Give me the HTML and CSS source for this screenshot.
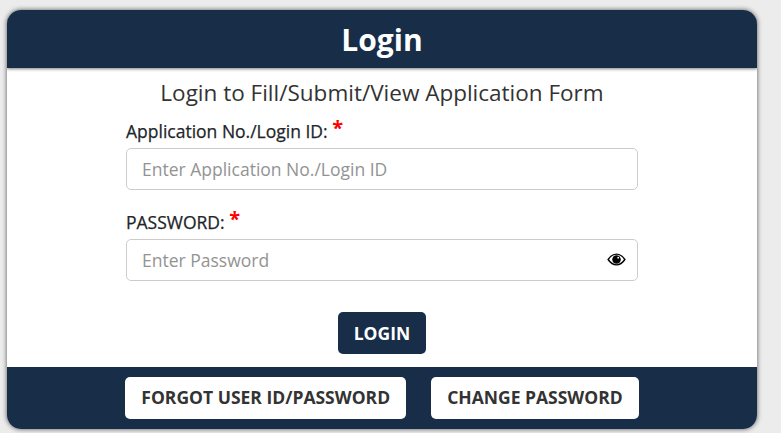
FILE: index.html
```html
<!DOCTYPE html>
<html lang="en">
<head>
    <meta charset="UTF-8">
    <meta name="viewport" content="width=device-width, initial-scale=1.0">
    <title>Login</title>
    <link rel="stylesheet" href="styles.css">
</head>
<body>
    <div class="login-card">
        <div class="card-header">
            <h1>Login</h1>
        </div>
        <div class="card-body">
            <h2 class="form-title">Login to Fill/Submit/View Application Form</h2>
            <form class="login-form">
                <div class="form-group">
                    <label for="loginId">Application No./Login ID: <span class="required">*</span></label>
                    <input type="text" id="loginId" placeholder="Enter Application No./Login ID">
                </div>
                <div class="form-group">
                    <label for="password">PASSWORD: <span class="required">*</span></label>
                    <div class="password-box">
                        <input type="password" id="password" placeholder="Enter Password">
                        <svg class="eye-icon" viewBox="0 0 20 14" width="19" height="13" aria-hidden="true">
                            <path d="M1 7C3.5 3.2 6.5 1.2 10 1.2S16.500 3.200 19 7C16.500 10.800 13.500 12.800 10 12.800S3.500 10.800 1 7Z" fill="#fff" stroke="#000" stroke-width="1.500"/>
                            <circle cx="10" cy="7" r="4.600" fill="#000"/>
                            <circle cx="11.800" cy="5" r="1" fill="#fff"/>
                        </svg>
                    </div>
                </div>
                <div class="login-row">
                    <button type="button" class="login-button">LOGIN</button>
                </div>
            </form>
        </div>
        <div class="card-footer">
            <a href="#" class="footer-button">FORGOT USER ID/PASSWORD</a>
            <a href="#" class="footer-button">CHANGE PASSWORD</a>
        </div>
    </div>
</body>
</html>
```

FILE: styles.css
```css
* {
    margin: 0;
    padding: 0;
    box-sizing: border-box;
    font-family: 'Open Sans', sans-serif;
}

body {
    background-color: #ececec;
    padding: 10px 24px 4px 7px;
    height: 433px;
    overflow: hidden;
}

.login-card {
    height: 419px;
    display: flex;
    flex-direction: column;
    background: white;
    border-radius: 14px;
    overflow: hidden;
    box-shadow: 0 0 5px rgba(0,0,0,0.65);
}

.card-header {
    height: 58px;
    background: #182d47;
    box-shadow: 0 1px 3px rgba(0,0,0,0.5);
    display: flex;
    justify-content: center;
    align-items: center;
}

.card-header h1 {
    color: white;
    font-size: 30px;
    font-weight: 700;
}

.card-body {
    flex: 1;
    padding-top: 9px;
}

.form-title {
    font-size: 22.5px;
    line-height: 32px;
    font-weight: 400;
    color: #333;
    text-align: center;
    margin-bottom: 6px;
}

.login-form {
    width: 512px;
    margin: 0 auto;
}

.form-group {
    margin-bottom: 16px;
}

.form-group label {
    display: block;
    height: 33px;
    padding-top: 5px;
    font-size: 17.5px;
    line-height: 22px;
    font-weight: 500;
    color: #212529;
    -webkit-text-stroke: 0.25px #212529;
}

.required {
    color: #f00;
    font-size: 20px;
    line-height: 16px;
    font-weight: 700;
    vertical-align: 3px;
    -webkit-text-stroke: 0;
}

.form-group input {
    display: block;
    width: 100%;
    height: 42px;
    padding: 0 15px;
    border: 1px solid #ccc;
    border-radius: 5px;
    font-size: 17.5px;
    color: #333;
    outline: none;
}

.form-group input::placeholder {
    color: #939393;
}

.password-box {
    position: relative;
}

.eye-icon {
    position: absolute;
    top: 14px;
    right: 12px;
}

.login-row {
    display: flex;
    justify-content: center;
    padding-top: 15px;
}

.login-button {
    width: 88px;
    height: 42px;
    background: #182d47;
    color: white;
    border: none;
    border-radius: 5px;
    font-size: 17.5px;
    font-weight: 700;
}

.card-footer {
    height: 62px;
    background: #182d47;
    display: flex;
    justify-content: center;
    align-items: center;
    gap: 25px;
}

.footer-button {
    height: 42px;
    padding: 0 16px 2px;
    display: flex;
    align-items: center;
    background: white;
    border-radius: 5px;
    color: #333;
    font-size: 17.5px;
    font-weight: 700;
    text-decoration: none;
}
```
